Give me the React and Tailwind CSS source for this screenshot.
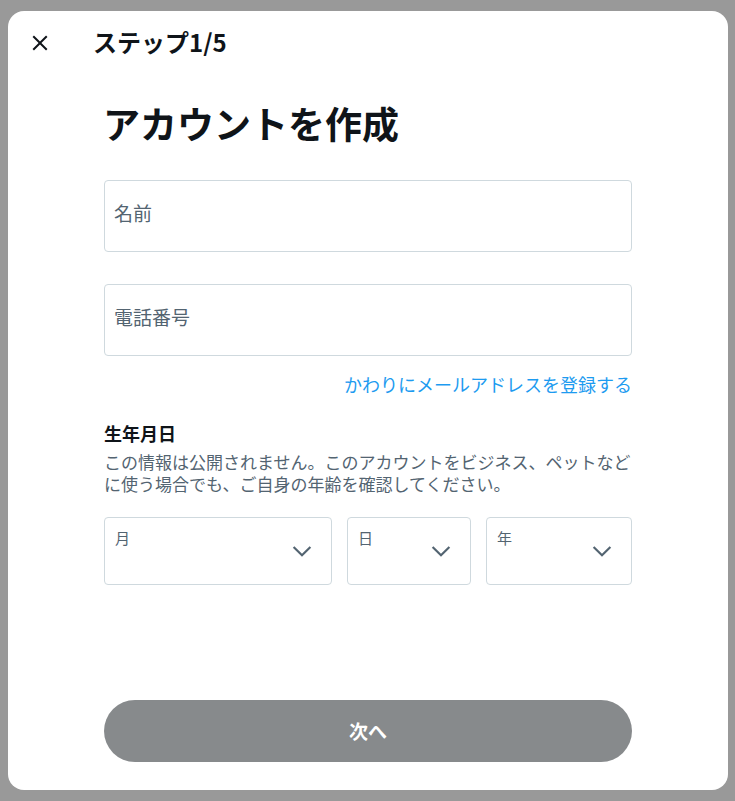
import React from 'react';

const font = { fontFamily: '"Noto Sans CJK JP", "Noto Sans", sans-serif' };

function Chevron() {
    return (
        <svg viewBox="0 0 24 24" className="w-[26px] h-[26px] fill-[#536471]">
            <path d="M3.543 8.96l1.414-1.42L12 14.59l7.043-7.05 1.414 1.42L12 17.41 3.543 8.96z" />
        </svg>
    );
}

function SelectBox({ label, className }) {
    return (
        <div className={`h-[68px] border border-[#cfd9de] rounded-[4px] flex justify-between ${className}`}>
            <span className="pl-[10px] pt-[9px] text-[15px] leading-[22px] text-[#536471]">{label}</span>
            <div className="flex items-center pr-[16px]">
                <Chevron />
            </div>
        </div>
    );
}

function TextField({ label, className = '' }) {
    return (
        <div className={`h-[72px] border border-[#cfd9de] rounded-[4px] flex items-center px-[9px] pb-[6px] ${className}`}>
            <span className="text-[19px] leading-[24px] text-[#536471]">{label}</span>
        </div>
    );
}

export default function App() {
    return (
        <div className="w-full h-screen bg-[#999999] pl-[8px] pr-[7px] pt-[11px] pb-[11px]" style={font}>
            <div className="h-full bg-white rounded-2xl flex flex-col">
                <div className="h-[64px] flex items-center pl-[20px]">
                    <svg viewBox="0 0 24 24" className="w-[24px] h-[24px] fill-[#0f1419]">
                        <path d="M10.59 12L4.54 5.96l1.42-1.42L12 10.59l6.04-6.05 1.42 1.42L13.41 12l6.05 6.04-1.42 1.42L12 13.41l-6.04 6.05-1.42-1.42L10.59 12z" />
                    </svg>
                    <span className="ml-[41px] mb-[2px] text-[24px] leading-[28px] font-bold text-[#0f1419]">ステップ1/5</span>
                </div>

                <div className="flex-1 flex flex-col px-[96px] pb-[28px]">
                    <h1 className="mt-[26px] -ml-[1px] text-[37px] leading-[44px] font-bold text-[#0f1419]">アカウントを作成</h1>

                    <TextField label="名前" className="mt-[35px]" />
                    <TextField label="電話番号" className="mt-[32px]" />

                    <div className="mt-[16px] text-right text-[18px] leading-[24px] text-[#1d9bf0]">
                        かわりにメールアドレスを登録する
                    </div>

                    <div className="mt-[25px] text-[18px] leading-[24px] font-bold text-[#0f1419]">生年月日</div>
                    <p className="mt-[6px] text-[17px] leading-[22px] text-[#536471]">
                        この情報は公開されません。このアカウントをビジネス、ペットなどに使う場合でも、ご自身の年齢を確認してください。
                    </p>

                    <div className="mt-[22px] flex gap-[15px]">
                        <SelectBox label="月" className="w-[228px]" />
                        <SelectBox label="日" className="w-[124px]" />
                        <SelectBox label="年" className="flex-1" />
                    </div>

                    <button className="mt-auto h-[62px] w-full rounded-full bg-[#878a8c] text-white text-[19px] font-bold">
                        次へ
                    </button>
                </div>
            </div>
        </div>
    );
}
